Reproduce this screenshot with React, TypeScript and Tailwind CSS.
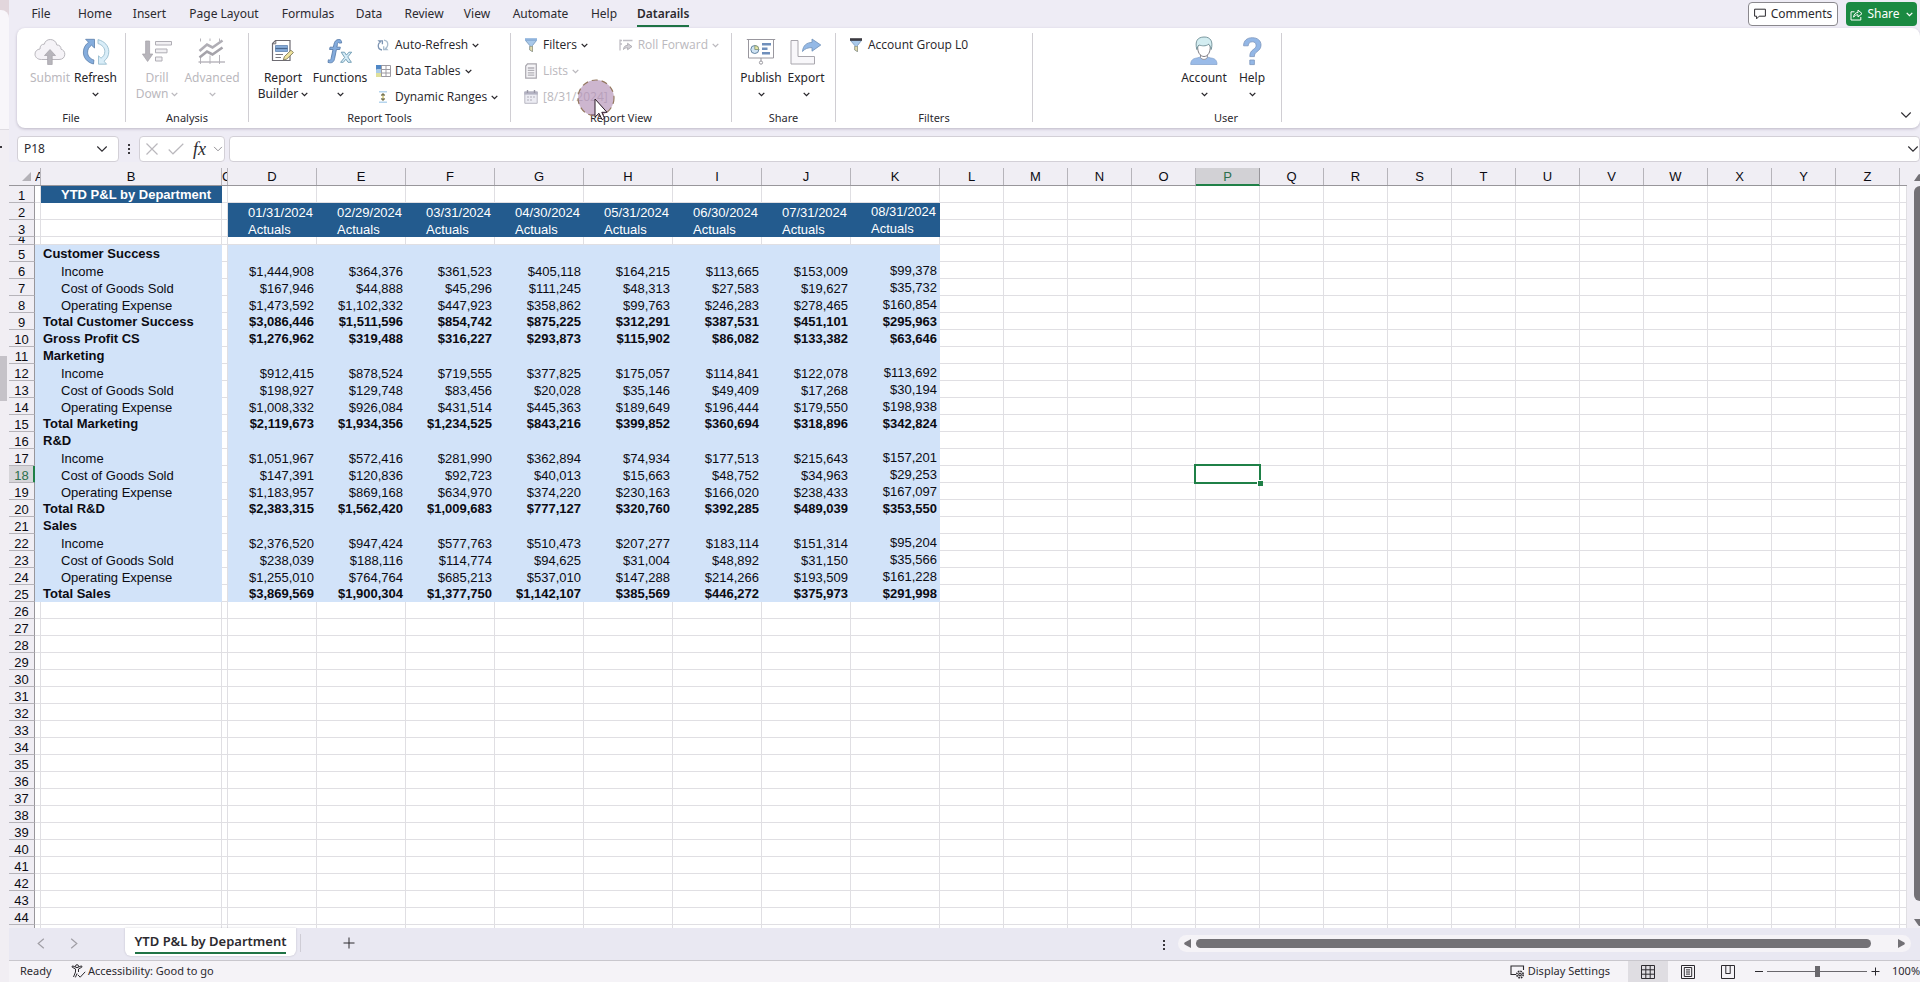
import React from "react";

const SANS = "font-['Noto_Sans',sans-serif]";
const ARIAL = "font-['Liberation_Sans',Arial,sans-serif]";

function Chevron({ className = "" }: { className?: string }) {
  return (
    <svg viewBox="0 0 7 5" width="7" height="5" className={className} fill="none" stroke="currentColor" strokeWidth="1.3" aria-hidden="true">
      <path d="M0.7 0.9 L3.5 3.6 L6.3 0.9" />
    </svg>
  );
}

function WideChevron({ className = "" }: { className?: string }) {
  return (
    <svg viewBox="0 0 12 8" width="12" height="8" className={className} fill="none" stroke="currentColor" strokeWidth="1.1" aria-hidden="true">
      <path d="M1.3 1.5 L6 6.2 L10.7 1.5" />
    </svg>
  );
}

/* ---------- Ribbon icons ---------- */

const big = { width: 32, height: 30, viewBox: "0 0 32 30", fill: "none", "aria-hidden": true } as const;
const small = { width: 16, height: 16, viewBox: "0 0 16 16", fill: "none", "aria-hidden": true } as const;

const SubmitIcon = () => (
  <svg {...big}>
    <path d="M7.5 23.5 C3.5 23.5 1 21.2 1 18.2 C1 15.2 3.2 13.2 6 13 C5.8 9.8 7.8 8 10.3 8.2 C11 5.2 13.2 3.5 16.3 3.5 C19.8 3.5 22.3 5.8 22.8 9 C25.6 8.8 27.2 10.8 27 13.2 C29.3 13.8 30.8 15.6 30.8 18.2 C30.8 21.4 28.6 23.5 25 23.5 Z" fill="#f5f3f7" stroke="#b9b7bd" strokeWidth="1" />
    <path d="M16 13.5 L21.5 19.5 H18.2 V28.5 H13.6 V19.5 H10.5 Z" fill="#b7b5bb" stroke="#a3a1a8" strokeWidth="0.7" />
  </svg>
);

const RefreshIcon = () => (
  <svg {...big}>
    <path d="M13.5 28 C7 26.3 3.2 21.5 3.4 16 C3.5 11.5 5.6 8.4 8.6 6.3 L5.6 3.3 H14.5 V12 L11.5 9.2 C9 11 7.6 13.3 7.6 16.2 C7.6 20 10 22.8 13.9 24 Z" fill="#85addd" stroke="#5c7fa9" strokeWidth="0.8" />
    <path d="M18 3.6 C24.6 5.2 28.8 10 28.8 15.6 C28.8 19.8 27 22.9 24 25.2 L26.6 28.2 H18.5 V19.8 L21 22.2 C23.4 20.6 24.8 18.4 24.8 15.6 C24.8 11.8 22.2 8.8 18 7.6 Z" fill="#d9edf8" stroke="#8fb6c9" strokeWidth="0.8" />
  </svg>
);

const DrillIcon = () => (
  <svg {...big}>
    <path d="M4.6 5 H8.6 V18 H11.8 L6.6 25.5 L1.4 18 H4.6 Z" fill="#b7b5bb" stroke="#a3a1a8" strokeWidth="0.7" />
    <path d="M14.5 5.5 H30.5 V9 H14.5 Z M14.5 13 H26 V16.8 H14.5 Z M14.5 21 H21 V25 H14.5 Z" fill="#f1f0f3" stroke="#b0aeb5" strokeWidth="1" />
  </svg>
);

const AdvancedIcon = () => (
  <svg {...big}>
    <path d="M4.5 2.5 V5.5 M14 2.5 V5 M23.5 2.5 V5 M4.5 22 V28 M14 19.5 V28 M23.5 19 V28" stroke="#b7b5bb" strokeWidth="1" />
    <path d="M2.5 26 H29" stroke="#b0aeb5" strokeWidth="1.3" />
    <path d="M3.5 15 L11 8.5 L16.5 11.5 L26.5 4.5" stroke="#b0aeb5" strokeWidth="2.6" />
    <path d="M3.5 21.5 L11 15.5 L16.5 18.5 L26.5 11.5" stroke="#a5a3aa" strokeWidth="2.6" />
  </svg>
);

const BuilderIcon = () => (
  <svg {...big}>
    <path d="M8.5 4.5 H23 V24.5 H5.5 V7.5 Z" fill="#fff" stroke="#6e6c73" strokeWidth="1.2" />
    <path d="M5.5 7.8 H8.8 V4.5" stroke="#6e6c73" strokeWidth="1" />
    <path d="M8.5 9.5 H20.5 V15.5 H8.5 Z" fill="#86abd8" stroke="#6285b3" strokeWidth="0.8" />
    <path d="M8.5 12.5 H20.5" stroke="#48668f" strokeWidth="1.2" />
    <path d="M8.5 18.5 H16 M8.5 21.5 H14" stroke="#77757c" strokeWidth="1.2" />
    <path d="M16.3 24 L17.4 20.6 L24 14.2 L26.4 16.6 L19.8 23 Z" fill="#efe39d" stroke="#7d7757" strokeWidth="0.9" />
  </svg>
);

const FunctionsIcon = () => (
  <svg {...big}>
    <path d="M17.6 7 C17.7 4.7 16.9 3.5 14.9 3.5 C11.8 3.5 10.5 5.6 9.9 8.6 L9.4 11.2 H6 L5.6 13.5 H9 L7.1 22.4 C6.8 24 6.2 24.3 4.4 23.8 L4 26.4 C8 27.6 9.9 26 10.6 22.6 L12.4 13.5 H15.8 L16.3 11.2 H12.9 L13.4 8.4 C13.7 6.6 14.3 6 15.2 7 Z" fill="#84acdd" stroke="#5a7eac" strokeWidth="0.9" />
    <path d="M17.2 16.2 H20.5 L22.4 19.1 L24.9 16.2 H27.7 L23.8 20.9 L27.4 26.3 H24 L21.9 23.2 L19.3 26.3 H16.6 L20.6 21.4 Z" fill="#d6ecf7" stroke="#6a97b0" strokeWidth="0.9" />
  </svg>
);

const PublishIcon = () => (
  <svg {...big}>
    <path d="M3.5 3.5 H28.5 V22 H3.5 Z" fill="#fff" stroke="#99979e" strokeWidth="1" />
    <path d="M1.8 3.5 H30.2" stroke="#99979e" strokeWidth="1" />
    <path d="M16 22 V25" stroke="#99979e" strokeWidth="1" />
    <circle cx="16" cy="26.6" r="1.6" stroke="#99979e" />
    <circle cx="9.8" cy="13.5" r="4" fill="#cfe3f3" stroke="#6686a3" />
    <path d="M9.8 9.5 V13.5 H13.8 A4 4 0 0 0 9.8 9.5 Z" fill="#e8e7a4" stroke="#7b8f74" strokeWidth="0.8" />
    <path d="M17 8.3 H26 M17 12.8 H22.5 M17 17.3 H25" stroke="#6f8fbb" strokeWidth="2.4" />
  </svg>
);

const ExportIcon = () => (
  <svg {...big}>
    <path d="M1 4.5 H8 V20.5 H24.5 V28 H1 Z" fill="#f8f7fa" stroke="#a8a6ad" strokeWidth="1" />
    <path d="M12.5 15.5 C13 9.5 16.5 6.6 22 6.4 V3 L30.8 9 L22 15.2 V11.6 C18 11.6 15 12.6 12.5 15.5 Z" fill="#94b9e6" stroke="#6d8fb8" strokeWidth="0.8" />
  </svg>
);

const AccountIcon = () => (
  <svg {...big}>
    <path d="M2.7 28.5 C2.7 23.8 5.5 22.4 9 22 L12.7 20.9 V18.5 H19 V20.9 L22.8 22 C26.5 22.4 29 23.8 29 28.5 Z" fill="#9abbe8" stroke="#7f9fca" strokeWidth="0.7" />
    <path d="M12.5 17.5 V21.5 C14 24 17.8 24 19.3 21.5 V17.5" fill="#fff" stroke="#8b8990" strokeWidth="0.9" />
    <path d="M9.7 10 C9.3 16 12 20.5 16 20.5 C20 20.5 22.6 16 22.2 10 L19.5 7.5 L11.5 8.5 Z" fill="#fff" stroke="#6e6c73" strokeWidth="0.9" />
    <path d="M8.8 13.5 C6.7 5 9.5 1.2 16 1 C22.5 0.8 25.4 5.5 23.2 13.5 C22.6 10.8 22 9.5 20.6 8.2 C17.6 10.6 14 9.9 11 9 C9.7 10.3 9.2 11.6 8.8 13.5 Z" fill="#d3edf1" stroke="#6e8d95" strokeWidth="0.9" />
  </svg>
);

const HelpIcon = () => (
  <svg {...big}>
    <path d="M7.6 9.8 C7.6 4.6 11 1.7 16.3 1.7 C21.5 1.7 25 4.6 25 9 C25 12.3 23.3 14 21 15.7 C19 17.2 18.4 18.2 18.4 20.6 H13.8 C13.8 16.9 14.9 15.4 17.2 13.6 C19.2 12.1 20.1 11.2 20.1 9.3 C20.1 7.1 18.7 5.8 16.4 5.8 C13.8 5.8 12.3 7.2 12.2 9.8 Z" fill="#93b7e6" stroke="#7c96bd" strokeWidth="0.8" />
    <path d="M13.8 24 H18.4 V28.6 H13.8 Z" fill="#93b7e6" stroke="#7c96bd" strokeWidth="0.8" />
  </svg>
);

const SmallRefreshIcon = () => (
  <svg {...small}>
    <path d="M7 13 C4.5 12.6 3 10.6 3.3 8 C3.5 6.7 4.2 5.7 5.2 5 L4 3.8 H7.4 V7.2" stroke="#7d94b2" strokeWidth="1.3" />
    <path d="M9 3.2 C11.5 3.6 13 5.6 12.7 8.2 C12.5 9.5 11.9 10.5 10.8 11.3 L12 12.5 H8.7 V9.2" stroke="#a9bccd" strokeWidth="1.3" />
  </svg>
);

const DataTablesIcon = () => (
  <svg {...small}>
    <path d="M1.5 2.5 H15.5 V13.5 H1.5 Z" fill="#fff" stroke="#9d9ba2" />
    <path d="M1 2 H6.5 V6.5 H1 Z" fill="#4f87c6" />
    <path d="M1 6.5 H6.5 V10 H1 Z" fill="#a9cbea" />
    <path d="M1 10 H6.5 V14 H1 Z" fill="#dfe09b" />
    <path d="M6.5 2.5 V13.5 M11 2.5 V13.5 M6 6.5 H15.5 M6 10 H15.5" stroke="#9d9ba2" />
  </svg>
);

const RangesIcon = () => (
  <svg {...small}>
    <path d="M4 2 H12 V3.6 H4 Z M4 12.4 H12 V14 H4 Z" fill="#b6d5ee" />
    <path d="M8 4.8 V11.2 M6.2 6.5 L8 4.8 L9.8 6.5 M6.2 9.5 L8 11.2 L9.8 9.5" stroke="#77734d" strokeWidth="1.1" />
    <path d="M7.2 7 H8.8 V9 H7.2 Z" fill="#ece08c" />
  </svg>
);

const FilterIcon = ({ cap }: { cap: string }) => (
  <svg {...small}>
    <path d="M2.5 3.5 H13.5 L9.5 8.5 V14.5 L6.8 13 V8.5 Z" fill="#a9c9ea" stroke="#7e9cbd" strokeWidth="0.9" />
    <path d="M2 1.2 H14 V3.8 H2 Z" fill={cap} />
    <path d="M6.8 9.5 H9.5 V14.5 L6.8 13 Z" fill="#e3deb1" stroke="#95916f" strokeWidth="0.6" />
  </svg>
);

const ListsIcon = () => (
  <svg {...small}>
    <path d="M4.5 0.8 H13.3 V15.2 H2.7 V3 Z" fill="#f5f4f7" stroke="#a9a7ae" strokeWidth="1.2" />
    <path d="M4.8 5 H11.3 M4.8 7.4 H11.3 M4.8 9.8 H11.3 M4.8 12.2 H11.3" stroke="#b1afb6" strokeWidth="1.3" />
  </svg>
);

const CalendarIcon = () => (
  <svg {...small}>
    <path d="M1.8 3 H14.2 V14.3 H1.8 Z" fill="#ececf3" stroke="#bab8c2" strokeWidth="1" />
    <path d="M1.3 2.5 H14.7 V5.6 H1.3 Z" fill="#b3b2c2" />
    <path d="M4.5 1 V4 M11.5 1 V4" stroke="#9998a6" strokeWidth="1.4" />
    <path d="M4 8 H6 M7 8 H9 M10 8 H12 M4 11 H6 M7 11 H9" stroke="#c4c2cd" strokeWidth="1.6" />
  </svg>
);

const RollIcon = () => (
  <svg {...small}>
    <path d="M2 13.5 V2.5 M1.5 3.5 H4 M5 3.5 H14.5 M2 7 H4" stroke="#c0bec5" strokeWidth="1.3" />
    <path d="M5.5 12.5 C5.7 9.5 7.2 8.4 9.6 8.4 V6.3 L14 9.6 L9.6 12.7 V10.8 C7.8 10.7 6.6 11.2 5.5 12.5 Z" fill="#d3d1d7" stroke="#a3a1a8" strokeWidth="0.8" />
  </svg>
);

/* ---------- Ribbon parts ---------- */

type BigProps = { icon: React.ReactNode; label: string; second?: string; arrow?: boolean; disabled?: boolean; width: string };

function BigButton({ icon, label, second, arrow = true, disabled, width }: BigProps) {
  return (
    <button type="button" disabled={disabled} className={`${width} flex shrink-0 flex-col items-center pt-2 leading-4 whitespace-nowrap ${disabled ? "text-[#bab8bd]" : "text-[#262429]"}`}>
      {icon}
      <span className="mt-1">{label}</span>
      <span className="flex h-4 items-center gap-[3px]">
        {second}
        {arrow && <Chevron />}
      </span>
    </button>
  );
}

function SmallButton({ icon, label, arrow = true, disabled }: { icon: React.ReactNode; label: string; arrow?: boolean; disabled?: boolean }) {
  return (
    <button type="button" disabled={disabled} className={`flex h-[26px] items-center gap-1 font-['Open_Sans','Noto_Sans',sans-serif] leading-4 whitespace-nowrap ${disabled ? "text-[#bab8bd]" : "text-[#262429]"}`}>
      {icon}
      <span>{label}</span>
      {arrow && <Chevron />}
    </button>
  );
}

function Group({ title, width, pad, children }: { title: string; width: string; pad: string; children?: React.ReactNode }) {
  return (
    <section aria-label={title} className={`${width} flex shrink-0 flex-col`}>
      <div className={`${pad} flex h-[82px] items-start`}>{children}</div>
      <h2 className="text-center text-[11px] leading-4 text-[#2c2a2f]">{title}</h2>
    </section>
  );
}

const Divider = () => <div className="mt-[5px] mb-1.5 w-px shrink-0 bg-[#d0ced3]" />;

const TABS: [string, string][] = [
  ["File", "w-[48px]"],
  ["Home", "w-[60px]"],
  ["Insert", "w-[49px]"],
  ["Page Layout", "w-[100px]"],
  ["Formulas", "w-[68px]"],
  ["Data", "w-[54px]"],
  ["Review", "w-[56px]"],
  ["View", "w-[50px]"],
  ["Automate", "w-[77px]"],
  ["Help", "w-[50px]"],
];

function TopBar() {
  return (
    <header className="flex h-7 shrink-0 items-center pl-2 text-xs text-[#2c2a2f]">
      <nav aria-label="Ribbon tabs" className="flex items-center">
        {TABS.map(([t, w]) => (
          <button key={t} type="button" className={`${w} text-center leading-7 whitespace-nowrap`}>{t}</button>
        ))}
        <button type="button" className="ml-2 flex h-7 flex-col items-center pt-[5px] leading-[18px] font-semibold">
          <span className="border-b-2 border-[#1f7346] pb-0.5">Datarails</span>
        </button>
      </nav>
      <div className="ml-auto flex items-center gap-2 pr-[3px]">
        <button type="button" className="flex h-6 w-[90px] items-center justify-center gap-[5px] rounded border border-[#8a888d] bg-white whitespace-nowrap">
          <svg width="12" height="12" viewBox="0 0 12 12" fill="none" stroke="#2c2a2f" strokeWidth="1" aria-hidden="true">
            <path d="M0.6 1.2 H11.4 V8.2 H5.2 L2.6 10.8 V8.2 H0.6 Z" />
          </svg>
          Comments
        </button>
        <button type="button" className="flex h-6 w-[71px] items-center justify-center gap-1 rounded bg-[#1b8a42] text-white whitespace-nowrap">
          <svg width="13" height="13" viewBox="0 0 13 13" fill="none" stroke="#fff" strokeWidth="1" aria-hidden="true">
            <path d="M4.5 3.8 H1 V12 H10.8 V9" />
            <path d="M3.6 9.2 C3.8 6 5.6 4.6 8 4.5 V2 L12 5.6 L8 9 V6.8 C6 6.8 4.6 7.5 3.6 9.2 Z" />
          </svg>
          Share
          <Chevron className="ml-0.5" />
        </button>
      </div>
    </header>
  );
}

function Ribbon() {
  return (
    <div className="relative ml-2 flex h-[100px] shrink-0 rounded-lg bg-white text-xs shadow-[0_1px_3px_rgba(60,50,80,0.28)]">
      <Group title="File" width="w-[108px]" pad="pl-2.5">
        <BigButton width="w-[46px]" icon={<SubmitIcon />} label="Submit" arrow={false} disabled />
        <BigButton width="w-[45px]" icon={<RefreshIcon />} label="Refresh" />
      </Group>
      <Divider />
      <Group title="Analysis" width="w-[122px]" pad="px-1.5">
        <BigButton width="w-[50px]" icon={<DrillIcon />} label="Drill" second="Down" disabled />
        <BigButton width="w-[60px]" icon={<AdvancedIcon />} label="Advanced" disabled />
      </Group>
      <Divider />
      <Group title="Report Tools" width="w-[261px]" pad="px-1">
        <BigButton width="w-[60px]" icon={<BuilderIcon />} label="Report" second="Builder" />
        <BigButton width="w-[54px]" icon={<FunctionsIcon />} label="Functions" />
        <div className="ml-2 pt-1">
          <SmallButton icon={<SmallRefreshIcon />} label="Auto-Refresh" />
          <SmallButton icon={<DataTablesIcon />} label="Data Tables" />
          <SmallButton icon={<RangesIcon />} label="Dynamic Ranges" />
        </div>
      </Group>
      <Divider />
      <Group title="Report View" width="w-[220px]" pad="px-3">
        <div className="w-[95px] pt-1">
          <SmallButton icon={<FilterIcon cap="#8fb3dc" />} label="Filters" />
          <SmallButton icon={<ListsIcon />} label="Lists" disabled />
          <SmallButton icon={<CalendarIcon />} label="[8/31/2024]" arrow={false} disabled />
        </div>
        <div className="pt-1">
          <SmallButton icon={<RollIcon />} label="Roll Forward" disabled />
        </div>
      </Group>
      <Divider />
      <Group title="Share" width="w-[103px]" pad="px-1.5">
        <BigButton width="w-[46px]" icon={<PublishIcon />} label="Publish" />
        <BigButton width="w-[44px]" icon={<ExportIcon />} label="Export" />
      </Group>
      <Divider />
      <Group title="Filters" width="w-[196px]" pad="px-3">
        <div className="pt-1">
          <SmallButton icon={<FilterIcon cap="#3b3a40" />} label="Account Group L0" arrow={false} />
        </div>
      </Group>
      <Divider />
      <div className="w-[138px] shrink-0" />
      <Group title="User" width="w-[110px]" pad="pl-2">
        <BigButton width="w-[50px]" icon={<AccountIcon />} label="Account" />
        <BigButton width="w-[46px]" icon={<HelpIcon />} label="Help" />
      </Group>
      <Divider />
      <button type="button" aria-label="Ribbon display options" className="mt-auto mr-2 mb-[9px] ml-auto text-[#2c2a2f]">
        <WideChevron />
      </button>
      <svg width="40" height="44" viewBox="0 0 40 44" className="absolute top-[50px] left-[559px]" aria-hidden="true">
        <circle cx="20" cy="20" r="18" fill="#b694b8" fillOpacity="0.68" stroke="#94785f" strokeWidth="1.2" strokeDasharray="6 4" />
        <path d="M19 21 V39 L23 35.3 L26 41.6 L28.6 40.4 L25.8 34.3 H31 Z" fill="#fff" stroke="#2b1a26" strokeWidth="1" />
      </svg>
    </div>
  );
}

function FormulaBar() {
  return (
    <div className="mt-2 ml-2 flex h-[26px] shrink-0 items-center text-[#2c2a2f]">
      <div className="flex h-full w-[102px] items-center rounded border border-[#d3d0d7] bg-white pr-2.5">
        <input aria-label="Name box" defaultValue="P18" className="min-w-0 flex-1 bg-transparent pl-1.5 text-xs outline-none" />
        <button type="button" aria-label="Name list"><WideChevron /></button>
      </div>
      <div className="flex w-5 flex-col items-center gap-0.5">
        <i className="size-0.5 bg-[#3a383d]" />
        <i className="size-0.5 bg-[#3a383d]" />
        <i className="size-0.5 bg-[#3a383d]" />
      </div>
      <div className="flex h-full w-[86px] items-center rounded border border-[#d3d0d7] bg-white pl-1.5">
        <button type="button" aria-label="Cancel" className="w-[22px]">
          <svg width="12" height="12" viewBox="0 0 12 12" stroke="#bab8bd" strokeWidth="1.2" aria-hidden="true"><path d="M0.5 0.5 L11.5 11.5 M11.5 0.5 L0.5 11.5" /></svg>
        </button>
        <button type="button" aria-label="Enter" className="w-[25px]">
          <svg width="16" height="12" viewBox="0 0 16 12" fill="none" stroke="#bab8bd" strokeWidth="1.2" aria-hidden="true"><path d="M0.7 6.5 L5 10.8 L15.3 0.8" /></svg>
        </button>
        <button type="button" aria-label="Insert function" className="w-[20px] text-left font-['Liberation_Serif',serif] text-lg leading-5 italic">fx</button>
        <span className="text-[#8a888d]"><WideChevron className="w-2.5" /></span>
      </div>
      <div className="ml-1 flex h-full flex-1 items-center rounded border border-[#d3d0d7] bg-white">
        <input aria-label="Formula" className="h-full min-w-0 flex-1 bg-transparent px-2 text-xs outline-none" />
        <button type="button" aria-label="Expand formula bar"><WideChevron /></button>
      </div>
    </div>
  );
}

/* ---------- Sheet ---------- */

const DATES = ["01/31/2024", "02/29/2024", "03/31/2024", "04/30/2024", "05/31/2024", "06/30/2024", "07/31/2024", "08/31/2024"];

type Line = { label: string; bold?: boolean; values?: string[] };

const v = (s: string) => s.split(" ").map((n) => "$" + n);

const LINES: Record<number, Line> = {
  5: { label: "Customer Success", bold: true },
  6: { label: "Income", values: v("1,444,908 364,376 361,523 405,118 164,215 113,665 153,009 99,378") },
  7: { label: "Cost of Goods Sold", values: v("167,946 44,888 45,296 111,245 48,313 27,583 19,627 35,732") },
  8: { label: "Operating Expense", values: v("1,473,592 1,102,332 447,923 358,862 99,763 246,283 278,465 160,854") },
  9: { label: "Total Customer Success", bold: true, values: v("3,086,446 1,511,596 854,742 875,225 312,291 387,531 451,101 295,963") },
  10: { label: "Gross Profit CS", bold: true, values: v("1,276,962 319,488 316,227 293,873 115,902 86,082 133,382 63,646") },
  11: { label: "Marketing", bold: true },
  12: { label: "Income", values: v("912,415 878,524 719,555 377,825 175,057 114,841 122,078 113,692") },
  13: { label: "Cost of Goods Sold", values: v("198,927 129,748 83,456 20,028 35,146 49,409 17,268 30,194") },
  14: { label: "Operating Expense", values: v("1,008,332 926,084 431,514 445,363 189,649 196,444 179,550 198,938") },
  15: { label: "Total Marketing", bold: true, values: v("2,119,673 1,934,356 1,234,525 843,216 399,852 360,694 318,896 342,824") },
  16: { label: "R&D", bold: true },
  17: { label: "Income", values: v("1,051,967 572,416 281,990 362,894 74,934 177,513 215,643 157,201") },
  18: { label: "Cost of Goods Sold", values: v("147,391 120,836 92,723 40,013 15,663 48,752 34,963 29,253") },
  19: { label: "Operating Expense", values: v("1,183,957 869,168 634,970 374,220 230,163 166,020 238,433 167,097") },
  20: { label: "Total R&D", bold: true, values: v("2,383,315 1,562,420 1,009,683 777,127 320,760 392,285 489,039 353,550") },
  21: { label: "Sales", bold: true },
  22: { label: "Income", values: v("2,376,520 947,424 577,763 510,473 207,277 183,114 151,314 95,204") },
  23: { label: "Cost of Goods Sold", values: v("238,039 188,116 114,774 94,625 31,004 48,892 31,150 35,566") },
  24: { label: "Operating Expense", values: v("1,255,010 764,764 685,213 537,010 147,288 214,266 193,509 161,228") },
  25: { label: "Total Sales", bold: true, values: v("3,869,569 1,900,304 1,377,750 1,142,107 385,569 446,272 375,973 291,998") },
};

const LETTERS = "ABCDEFGHIJKLMNOPQRSTUVWXYZ".split("");
const ROWS = Array.from({ length: 45 }, (_, i) => i + 1);

const GRID = "border-r border-b border-[#e0dfe3]";
const FILL = "border-r border-b border-[#d2e3f9] bg-[#d2e3f9]";
const DARK = "border-r border-b border-[#235b8e] bg-[#235b8e] text-white";

/* Two text seats inside a 16px cell, the second one pixel lower. */
const HIGH = "pt-px leading-[15px]";
const LOW = "pt-[3px] leading-[13px]";

function colWidth(letter: string) {
  if (letter === "A" || letter === "C") return "w-1.5";
  if (letter === "B") return "w-[181px]";
  if (letter <= "K") return "w-[89px]";
  return "w-16";
}

function Cell({ row, col }: { row: number; col: number }) {
  const letter = LETTERS[col];
  const line = LINES[row];
  const seat = line?.bold ? `${HIGH} font-bold` : letter === "K" ? HIGH : LOW;

  if (letter === "B" && row === 1) return <td className={`${DARK} ${HIGH} pl-5 font-bold`}>YTD P&amp;L by Department</td>;
  if (line && letter === "A") return <td className={FILL} />;
  if (line && letter === "B") return <td className={`${FILL} ${seat} ${line.bold ? "pl-0.5" : "pl-5"}`}>{line.label}</td>;
  if (col >= 3 && col <= 10) {
    if (row === 2) return <td className={`${DARK} ${seat} pl-5`}>{DATES[col - 3]}</td>;
    if (row === 3) return <td className={`${DARK} ${seat} pl-5`}>Actuals</td>;
    if (line) return <td className={`${FILL} ${seat} pr-0.5 text-right`}>{line.values?.[col - 3]}</td>;
  }
  if (letter === "P" && row === 18)
    return (
      <td className={`${GRID} relative`}>
        <div className="absolute -inset-0.5 border-2 border-[#1f8047]" />
        <div className="absolute -right-1 -bottom-1 size-1.5 border-t border-l border-white bg-[#1f8047]" />
      </td>
    );
  return <td className={GRID} />;
}

function Sheet() {
  return (
    <table className={`${ARIAL} w-full table-fixed border-separate border-spacing-0 text-[13px] whitespace-nowrap text-[#0b0b12] [&_td]:align-top`}>
      <colgroup>
        <col className="w-[26px]" />
        {LETTERS.map((l) => (
          <col key={l} className={colWidth(l)} />
        ))}
        <col />
      </colgroup>
      <thead>
        <tr className="h-6 bg-[#f0eef4]">
          <th className="border-b border-[#98969b] p-0 align-bottom">
            <svg width="9" height="9" viewBox="0 0 9 9" className="mb-1 ml-[13px]" aria-hidden="true"><path d="M9 0 V9 H0 Z" fill="#b4b2b8" /></svg>
          </th>
          {LETTERS.map((l) => (
            <th key={l} scope="col" className={`border-b p-0 align-bottom font-normal ${l === "P" ? "border-[#1f8047] text-[#2c6f4c]" : "border-[#98969b]"}`}>
              <div
                className={`flex h-[17px] overflow-hidden border-r pt-px leading-4 ${l === "A" || l === "C" ? "justify-start" : "justify-center"} ${
                  l === "P" ? "border-[#98969b] bg-[#d2d1d5] shadow-[inset_0_-1px_0_#1f8047]" : "border-[#b6b4ba]"
                }`}
              >
                {l}
              </div>
            </th>
          ))}
          <th className="border-b border-[#98969b] p-0" />
        </tr>
      </thead>
      <tbody className="bg-white">
        {ROWS.map((r) => (
          <tr key={r} className={r === 4 ? "h-2" : "h-[17px]"}>
            <th
              scope="row"
              className={`border-r border-b p-0 text-center align-top font-normal ${
                r === 18 ? "border-r-[#1f8047] border-b-[#b6b4ba] bg-[#d6d5d9] text-[#2c6f4c] shadow-[inset_-1px_0_0_#1f8047]" : "border-r-[#98969b] border-b-[#b6b4ba] bg-[#f0eef4]"
              }`}
            >
              <div className={`flex items-end justify-center ${r === 4 ? "h-[7px] overflow-hidden leading-[11px]" : "h-4 leading-[13px]"}`}>{r}</div>
            </th>
            {LETTERS.map((l, c) => (
              <Cell key={l} row={r} col={c} />
            ))}
            <td className={GRID} />
          </tr>
        ))}
      </tbody>
    </table>
  );
}

function VerticalScroll() {
  return (
    <div className="flex w-[13px] shrink-0 flex-col overflow-hidden bg-[#f0eef4] pt-3 pl-[7px]">
      <svg width="12" height="7" viewBox="0 0 12 7" className="shrink-0" aria-hidden="true"><path d="M0 7 L4.5 0.5 Q6 -0.5 7.5 0.5 L12 7 Z" fill="#737176" /></svg>
      <div className="mt-[5px] min-h-0 w-3 flex-1 rounded-md bg-[#737176]" />
      <svg width="12" height="7" viewBox="0 0 12 7" className="mt-[18px] mb-0.5 shrink-0" aria-hidden="true"><path d="M0 0 L4.5 6.5 Q6 7.5 7.5 6.5 L12 0 Z" fill="#737176" /></svg>
    </div>
  );
}

function SheetTabs() {
  return (
    <div className="flex h-8 shrink-0 items-start bg-[#e9e8f2] text-[#2c2a2f]">
      <button type="button" aria-label="Previous sheet" className="mt-[10px] ml-7 text-[#a09ea5]">
        <svg width="8" height="11" viewBox="0 0 8 11" fill="none" stroke="currentColor" strokeWidth="1.2" aria-hidden="true"><path d="M6.8 0.8 L1.2 5.5 L6.8 10.2" /></svg>
      </button>
      <button type="button" aria-label="Next sheet" className="mt-[10px] ml-[25px] text-[#a09ea5]">
        <svg width="8" height="11" viewBox="0 0 8 11" fill="none" stroke="currentColor" strokeWidth="1.2" aria-hidden="true"><path d="M1.2 0.8 L6.8 5.5 L1.2 10.2" /></svg>
      </button>
      <button type="button" className="ml-[47px] h-7 w-[171px] rounded-b-md bg-white px-2 text-[13px] leading-[22px] font-semibold whitespace-nowrap shadow-[0_0_2px_rgba(60,50,80,0.25)]">
        <span className="inline-block border-b-2 border-[#1f7346]">YTD P&amp;L by Department</span>
      </button>
      <div className="mt-1.5 ml-1 h-[18px] w-px bg-[#cfcdd6]" />
      <button type="button" aria-label="New sheet" className="mt-[9px] ml-[42px]">
        <svg width="12" height="12" viewBox="0 0 12 12" stroke="currentColor" strokeWidth="1" aria-hidden="true"><path d="M6 0.5 V11.5 M0.5 6 H11.5" /></svg>
      </button>
      <div className="ml-auto flex w-[758px] items-start">
        <div className="mt-3 flex w-1 shrink-0 flex-col gap-0.5 pl-px">
          <i className="size-0.5 bg-[#3a383d]" />
          <i className="size-0.5 bg-[#3a383d]" />
          <i className="size-0.5 bg-[#3a383d]" />
        </div>
        <div className="mt-[7px] mr-[9px] ml-3 flex h-[17px] flex-1 items-center rounded-full bg-[#f5f3f7] px-1.5">
          <svg width="7" height="9" viewBox="0 0 7 9" aria-hidden="true"><path d="M7 0 V9 L0.6 5.4 Q-0.2 4.5 0.6 3.6 Z" fill="#737176" /></svg>
          <div className="mr-[27px] ml-[5px] h-[9px] flex-1 rounded-full bg-[#737176]" />
          <svg width="7" height="9" viewBox="0 0 7 9" aria-hidden="true"><path d="M0 0 V9 L6.4 5.4 Q7.2 4.5 6.4 3.6 Z" fill="#737176" /></svg>
        </div>
      </div>
    </div>
  );
}

function StatusBar() {
  const view = { width: 14, height: 14, viewBox: "0 0 14 14", fill: "none", stroke: "#2c2a2f", strokeWidth: 1, "aria-hidden": true } as const;
  return (
    <footer className="flex h-[22px] shrink-0 items-center overflow-hidden border-t border-[#c9c7cd] bg-[#f5f3f7] pl-[11px] text-[11px] whitespace-nowrap text-[#2c2a2f]">
      <span className="w-[51px]">Ready</span>
      <button type="button" className="flex items-center gap-0.5">
        <svg width="15" height="15" viewBox="0 0 15 15" fill="none" stroke="#2c2a2f" strokeWidth="1" aria-hidden="true">
          <circle cx="6" cy="2.2" r="1.5" />
          <path d="M1.2 3.2 L4.5 5 V8 L2.5 13 M10.8 3.2 L7.5 5 V8 M1.2 3.2 Q0.5 1.8 2 2 L4.6 3.2 M10.8 3.2 Q11.5 1.8 10 2 L7.4 3.2 M4.4 13.4 L6 9.5" />
          <path d="M6.8 10.8 L9.2 13.2 L14.2 7.8" />
        </svg>
        Accessibility: Good to go
      </button>
      <button type="button" className="ml-auto flex items-center gap-[3px]">
        <svg width="15" height="14" viewBox="0 0 15 14" fill="none" stroke="#2c2a2f" strokeWidth="1.1" aria-hidden="true">
          <path d="M13.5 5 V1 H1 V9.5 H6" />
          <circle cx="10" cy="9.5" r="3.2" strokeDasharray="1.6 0.9" strokeWidth="1.6" />
          <circle cx="10" cy="9.5" r="1.3" />
        </svg>
        Display Settings
      </button>
      <div className="ml-[18px] flex h-full">
        <button type="button" aria-label="Normal view" className="flex w-10 items-center justify-center bg-[#dfdde2]">
          <svg {...view}><path d="M0.5 0.5 H13.5 V13.5 H0.5 Z M4.8 0.5 V13.5 M9.2 0.5 V13.5 M0.5 4.8 H13.5 M0.5 9.2 H13.5" /></svg>
        </button>
        <button type="button" aria-label="Page layout view" className="flex w-10 items-center justify-center">
          <svg {...view}><path d="M0.5 0.5 H13.5 V13.5 H0.5 Z M3.3 2.5 H10.7 V11.5 H3.3 Z M5 4.9 H9 M5 7 H9 M5 9.1 H9" /></svg>
        </button>
        <button type="button" aria-label="Page break preview" className="flex w-10 items-center justify-center">
          <svg {...view}><path d="M0.5 0.5 H13.5 V13.5 H0.5 Z M4.8 0.5 V8.5 H9.2 V0.5 M4.8 8.5 H9.2" /></svg>
        </button>
      </div>
      <button type="button" aria-label="Zoom out" className="ml-[7px]">
        <svg width="8" height="8" viewBox="0 0 8 8" stroke="#2c2a2f" aria-hidden="true"><path d="M0 3.5 H8" /></svg>
      </button>
      <input
        type="range"
        aria-label="Zoom"
        min={10}
        max={190}
        defaultValue={100}
        className="mx-1 h-[11px] w-[100px] appearance-none bg-transparent [&::-webkit-slider-runnable-track]:h-px [&::-webkit-slider-runnable-track]:bg-[#6a686d] [&::-webkit-slider-thumb]:-mt-[5px] [&::-webkit-slider-thumb]:h-[11px] [&::-webkit-slider-thumb]:w-[5px] [&::-webkit-slider-thumb]:appearance-none [&::-webkit-slider-thumb]:bg-[#6a686d]"
      />
      <button type="button" aria-label="Zoom in">
        <svg width="9" height="9" viewBox="0 0 9 9" stroke="#2c2a2f" aria-hidden="true"><path d="M0.5 4.5 H8.5 M4.5 0.5 V8.5" /></svg>
      </button>
      <span className="w-10 overflow-hidden pl-3">100%</span>
    </footer>
  );
}

export default function App() {
  return (
    <div className={`${SANS} flex h-screen overflow-hidden bg-[#eeecf5]`}>
      <aside className="flex w-[9px] shrink-0 flex-col bg-[#f1eef3]">
        <div className="bg-[#e2d6dc] pt-2.5">
          <div className="h-[120px] rounded-tr-lg border-b border-[#dfdce2] bg-[#f8f6fa]" />
        </div>
        <div className="mt-4 h-0.5 w-0.5 bg-[#3a383d]" />
        <div className="mt-[208px] h-[45px] w-[7px] bg-[#c5c2c8]" />
      </aside>
      <div className="flex min-w-0 flex-1 flex-col">
        <TopBar />
        <Ribbon />
        <FormulaBar />
        <main className="flex min-h-0 flex-1">
          <div className="min-w-0 flex-1 overflow-hidden">
            <Sheet />
          </div>
          <VerticalScroll />
        </main>
        <SheetTabs />
        <StatusBar />
      </div>
    </div>
  );
}
